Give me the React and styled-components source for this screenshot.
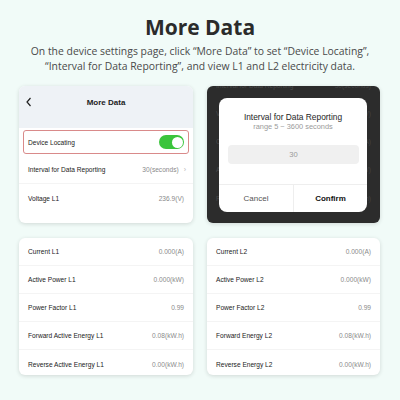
import styled, { createGlobalStyle } from "styled-components";

const GlobalStyle = createGlobalStyle`
  html, body {
    margin: 0;
    padding: 0;
    background: #f1fbf8;
  }
  body {
    width: 400px;
    height: 400px;
    overflow: hidden;
  }
`;

const Page = styled.div`
  width: 400px;
  height: 400px;
  background: #f1fbf8;
  padding-top: 13px;
  box-sizing: border-box;
  font-family: "Open Sans", "Noto Sans", sans-serif;
`;

const Title = styled.h1`
  margin: 0;
  text-align: center;
  font-size: 21px;
  line-height: 28px;
  font-weight: 700;
  color: #2b2b2b;
`;

const Lead = styled.p`
  margin: 3px 0 0;
  text-align: center;
  font-size: 10.4px;
  line-height: 15px;
  color: #4a4a4a;
`;

const Grid = styled.div`
  display: grid;
  grid-template-columns: 174px 173px;
  grid-template-rows: 137px 137px;
  column-gap: 14px;
  row-gap: 15px;
  padding: 12px 20px 0 19px;
`;

const Card = styled.div`
  position: relative;
  background: ${({ $dark }) => ($dark ? "#2c2c2c" : "#ffffff")};
  border-radius: 6px;
  box-shadow: 0 1px 4px rgba(0, 0, 0, 0.14);
  overflow: hidden;
  font-family: "Liberation Sans", Arial, sans-serif;
`;

const AppBar = styled.div`
  height: 42px;
  background: #eef2f6;
  display: flex;
  align-items: center;
  justify-content: center;
  position: relative;
  font-size: 8px;
  font-weight: 700;
  color: #1c1c1c;
  padding-bottom: 10px;
  box-sizing: border-box;
`;

const Back = styled.svg`
  position: absolute;
  left: 6px;
  top: 11px;
`;

const Row = styled.div`
  height: 28px;
  display: flex;
  align-items: center;
  justify-content: space-between;
  padding: 0 ${({ $pad }) => $pad || 9}px 0 9px;
  box-sizing: border-box;
  font-size: 6.6px;
  color: ${({ $faint }) => ($faint ? "#4a4a4a" : "#222")};
  border-bottom: 1px solid ${({ $faint }) => ($faint ? "transparent" : "#f4f4f4")};

  &:last-child {
    border-bottom: none;
  }
`;

const HighlightRow = styled(Row)`
  height: 24px;
  margin: 2px 4px;
  padding: 0 4px 0 4px;
  border: 1px solid #d98a8a;
  border-radius: 3px;
`;

const Value = styled.span`
  color: ${({ $faint }) => ($faint ? "#444" : "#8a8a8a")};
  display: flex;
  align-items: center;
  gap: 5px;
`;

const Toggle = styled.span`
  width: 25px;
  height: 14px;
  border-radius: 7px;
  background: #3bc43c;
  display: flex;
  align-items: center;
  justify-content: flex-end;
  padding-right: 1.5px;
  box-sizing: border-box;

  &::after {
    content: "";
    width: 11px;
    height: 11px;
    border-radius: 50%;
    background: #fff;
  }
`;

const Chevron = styled.span`
  color: #b8b8b8;
  font-size: 7px;
`;

const Behind = styled.div`
  margin-top: -14px;
`;

const Dialog = styled.div`
  position: absolute;
  left: 12px;
  right: 13px;
  top: 12px;
  bottom: 11px;
  background: #fff;
  border-radius: 8px;
  display: flex;
  flex-direction: column;
  font-family: "Liberation Sans", Arial, sans-serif;
`;

const DialogTitle = styled.div`
  text-align: center;
  font-size: 8.4px;
  font-weight: 500;
  color: #1e1e1e;
  margin-top: 14px;
  line-height: 10px;
`;

const DialogSub = styled.div`
  text-align: center;
  font-size: 7.4px;
  color: #9a9a9a;
  line-height: 9px;
`;

const Input = styled.div`
  margin: 14px 8px 0 9px;
  height: 19px;
  border-radius: 4px;
  background: #f0f0f0;
  display: flex;
  align-items: center;
  justify-content: center;
  font-size: 7.6px;
  color: #9a9a9a;
`;

const Actions = styled.div`
  margin-top: auto;
  height: 27px;
  border-top: 1px solid #eeeeee;
  display: grid;
  grid-template-columns: 74px 1fr;
`;

const ActionButton = styled.div`
  display: flex;
  align-items: center;
  justify-content: center;
  font-size: 8px;
  font-weight: ${({ $primary }) => ($primary ? 700 : 400)};
  color: ${({ $primary }) => ($primary ? "#111" : "#555")};
  border-left: ${({ $primary }) => ($primary ? "1px solid #eeeeee" : "none")};
`;

const l1 = [
  ["Current L1", "0.000(A)"],
  ["Active Power L1", "0.000(kW)"],
  ["Power Factor L1", "0.99"],
  ["Forward Active Energy L1", "0.08(kW.h)"],
  ["Reverse Active Energy L1", "0.00(kW.h)"],
];

const l2 = [
  ["Current L2", "0.000(A)"],
  ["Active Power L2", "0.000(kW)"],
  ["Power Factor L2", "0.99"],
  ["Forward Energy L2", "0.08(kW.h)"],
  ["Reverse Energy L2", "0.00(kW.h)"],
];

const behindRows = [
  ["Interval for Data Reporting", "30(seconds)"],
  ["Voltage L1", "236.9(V)"],
  ["Current L1", "0.000(A)"],
  ["Active Power L1", "0.000(kW)"],
  ["Reverse Active Energy L1", "0.00(kW.h)"],
];

function DataCard({ rows }) {
  return (
    <Card>
      {rows.map(([label, value]) => (
        <Row key={label}>
          <span>{label}</span>
          <Value>{value}</Value>
        </Row>
      ))}
    </Card>
  );
}

export default function App() {
  return (
    <Page>
      <GlobalStyle />
      <Title>More Data</Title>
      <Lead>
        On the device settings page, click “More Data” to set “Device Locating”,
        <br />
        “Interval for Data Reporting”, and view L1 and L2 electricity data.
      </Lead>
      <Grid>
        <Card>
          <AppBar>
            <Back width="8" height="10" viewBox="0 0 8 10">
              <path d="M5.5 1 L2 5 L5.5 9" fill="none" stroke="#222" strokeWidth="1.2" />
            </Back>
            More Data
          </AppBar>
          <HighlightRow>
            <span>Device Locating</span>
            <Toggle />
          </HighlightRow>
          <Row $pad={7}>
            <span>Interval for Data Reporting</span>
            <Value>
              30(seconds)
              <Chevron>›</Chevron>
            </Value>
          </Row>
          <Row>
            <span>Voltage L1</span>
            <Value>236.9(V)</Value>
          </Row>
        </Card>

        <Card $dark>
          <Behind aria-hidden="true">
            {behindRows.map(([label, value]) => (
              <Row key={label} $faint>
                <span>{label}</span>
                <Value $faint>{value}</Value>
              </Row>
            ))}
          </Behind>
          <Dialog>
            <DialogTitle>Interval for Data Reporting</DialogTitle>
            <DialogSub>range 5 ~ 3600 seconds</DialogSub>
            <Input>30</Input>
            <Actions>
              <ActionButton>Cancel</ActionButton>
              <ActionButton $primary>Confirm</ActionButton>
            </Actions>
          </Dialog>
        </Card>

        <DataCard rows={l1} />
        <DataCard rows={l2} />
      </Grid>
    </Page>
  );
}
